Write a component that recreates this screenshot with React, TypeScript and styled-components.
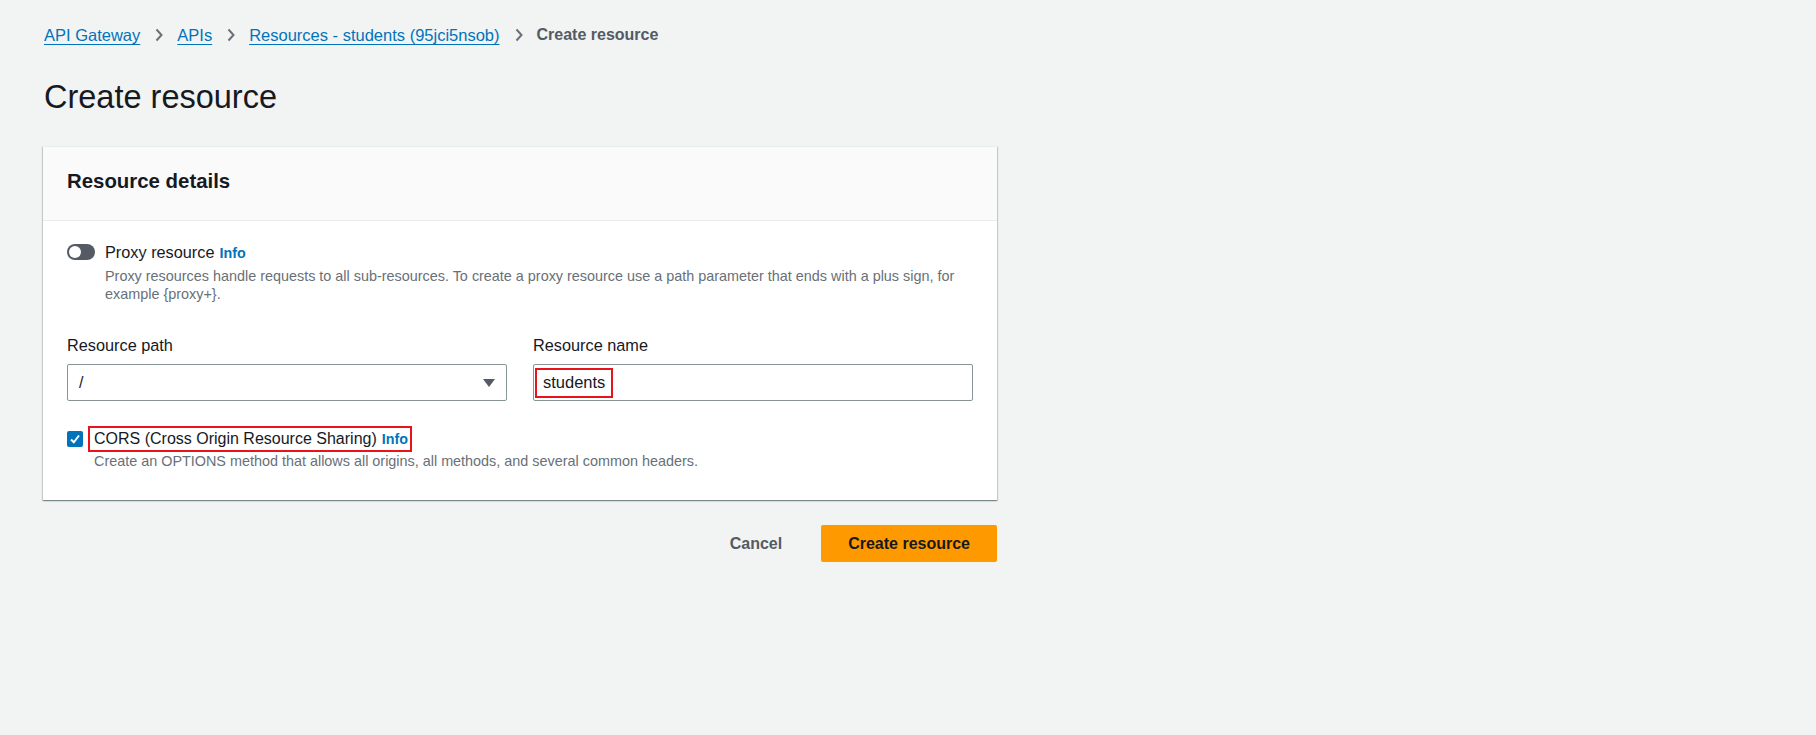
import React from "react";
import styled, { createGlobalStyle } from "styled-components";

const GlobalStyle = createGlobalStyle`
  html, body {
    margin: 0;
    padding: 0;
    background: #f2f3f3;
  }
  body {
    font-family: "Liberation Sans", Arial, sans-serif;
    color: #16191f;
  }
  * { box-sizing: border-box; }
`;

const Page = styled.div`
  width: 1816px;
  min-height: 735px;
  padding: 25px 0 0 43px;
`;

const Column = styled.div`
  width: 954px;
  display: flex;
  flex-direction: column;
`;

const Breadcrumbs = styled.nav`
  display: flex;
  align-items: center;
  height: 20px;
  font-size: 16.5px;
  line-height: 20px;
  padding-left: 1px;
`;

const CrumbLink = styled.a`
  color: #0073bb;
  text-decoration: underline;
  text-underline-offset: 3px;
  text-decoration-thickness: 1px;
  cursor: pointer;
`;

const CrumbCurrent = styled.span`
  color: #545b64;
  font-size: 16px;
  font-weight: 700;
`;

const Sep = styled.span`
  display: inline-flex;
  width: 8px;
  height: 14px;
  margin: 0 14px 0 15px;
  color: #687078;
`;

const Title = styled.h1`
  margin: 32px 0 0 0;
  padding-left: 1px;
  font-size: 32.5px;
  line-height: 40px;
  font-weight: 400;
  color: #16191f;
`;

const Card = styled.section`
  margin-top: 29px;
  background: #ffffff;
  border-top: 1px solid #eaeded;
  box-shadow: 0 1px 1px 0 rgba(0, 28, 36, 0.3),
    1px 1px 1px 0 rgba(0, 28, 36, 0.15),
    -1px 1px 1px 0 rgba(0, 28, 36, 0.15);
`;

const CardHeader = styled.header`
  height: 74px;
  display: flex;
  align-items: center;
  padding: 0 24px 6px 24px;
  background: #fafafa;
  border-bottom: 1px solid #eaeded;
`;

const CardTitle = styled.h2`
  margin: 0;
  font-size: 20.4px;
  line-height: 24px;
  font-weight: 700;
  color: #16191f;
`;

const CardBody = styled.div`
  padding: 20px 24px 30px 24px;
  display: flex;
  flex-direction: column;
`;

const ToggleRow = styled.div`
  display: flex;
  align-items: flex-start;
  gap: 10px;
`;

const ToggleTrack = styled.span<{ $on?: boolean }>`
  flex: none;
  position: relative;
  width: 28px;
  height: 16px;
  margin-top: 3px;
  border-radius: 8px;
  background: ${(p) => (p.$on ? "#0073bb" : "#545b64")};
`;

const ToggleKnob = styled.span<{ $on?: boolean }>`
  position: absolute;
  top: 2px;
  left: ${(p) => (p.$on ? "14px" : "2px")};
  width: 12px;
  height: 12px;
  border-radius: 50%;
  background: #ffffff;
`;

const OptionText = styled.div`
  display: flex;
  flex-direction: column;
`;

const OptionLabel = styled.div`
  font-size: 16.3px;
  line-height: 22px;
  height: 22px;
  color: #16191f;
  white-space: nowrap;
`;

const InfoLink = styled.a`
  display: inline-block;
  margin-left: 5px;
  font-size: 14.3px;
  line-height: 18px;
  font-weight: 700;
  color: #0073bb;
  cursor: pointer;
`;

const Description = styled.div<{ $indent?: number }>`
  font-size: 14.4px;
  line-height: 18px;
  color: #687078;
  margin-top: ${(p) => (p.$indent ? 0 : 4)}px;
  padding-left: ${(p) => p.$indent ?? 0}px;
`;

const FieldGrid = styled.div`
  margin-top: 31px;
  display: grid;
  grid-template-columns: 1fr 1fr;
  column-gap: 26px;
`;

const Field = styled.div`
  display: flex;
  flex-direction: column;
`;

const FieldLabel = styled.label`
  font-size: 16.3px;
  line-height: 22px;
  color: #16191f;
  margin-bottom: 8px;
`;

const SelectBox = styled.div`
  height: 37px;
  border: 1px solid #879596;
  border-radius: 2px;
  background: #fff;
  display: flex;
  align-items: center;
  justify-content: space-between;
  padding: 0 11px 0 11px;
  font-size: 16px;
  color: #16191f;
`;

const Caret = styled.svg`
  width: 12px;
  height: 8px;
  fill: #545b64;
`;

const InputBox = styled.div`
  height: 37px;
  border: 1px solid #879596;
  border-radius: 2px;
  background: #fff;
  display: flex;
  align-items: center;
  padding: 0 1px;
  font-size: 16.5px;
  color: #16191f;
`;

const Highlight = styled.span<{ $h: number }>`
  display: inline-flex;
  align-items: center;
  height: ${(p) => p.$h}px;
  border: 2px solid #e8141c;
  padding: 0 6px 0 6px;
`;

const CheckRow = styled.div`
  margin-top: 25px;
  display: flex;
  align-items: center;
  gap: 5px;
`;

const CheckBox = styled.span`
  flex: none;
  width: 16px;
  height: 16px;
  border-radius: 2px;
  background: #0073bb;
  display: inline-flex;
  align-items: center;
  justify-content: center;
`;

const CheckLabel = styled(Highlight)`
  padding: 0 2px 0 4px;
  font-size: 16px;
  line-height: 22px;
  color: #16191f;
`;

const Actions = styled.div`
  margin-top: 25px;
  display: flex;
  justify-content: flex-end;
  align-items: center;
  gap: 19px;
`;

const Button = styled.button<{ $primary?: boolean }>`
  height: 37px;
  border: none;
  border-radius: 2px;
  padding: 0 ${(p) => (p.$primary ? 27 : 20)}px;
  font-family: inherit;
  font-size: 16px;
  font-weight: 700;
  cursor: pointer;
  background: ${(p) => (p.$primary ? "#ff9900" : "transparent")};
  color: ${(p) => (p.$primary ? "#16191f" : "#545b64")};
`;

const Chevron = () => (
  <Sep>
    <svg width="8" height="14" viewBox="0 0 8 14" fill="none">
      <path d="M1.5 1.5 L6.5 7 L1.5 12.5" stroke="currentColor" strokeWidth="2" />
    </svg>
  </Sep>
);

export default function App() {
  return (
    <>
      <GlobalStyle />
      <Page>
        <Column>
          <Breadcrumbs>
            <CrumbLink>API Gateway</CrumbLink>
            <Chevron />
            <CrumbLink>APIs</CrumbLink>
            <Chevron />
            <CrumbLink>Resources - students (95jci5nsob)</CrumbLink>
            <Chevron />
            <CrumbCurrent>Create resource</CrumbCurrent>
          </Breadcrumbs>

          <Title>Create resource</Title>

          <Card>
            <CardHeader>
              <CardTitle>Resource details</CardTitle>
            </CardHeader>
            <CardBody>
              <ToggleRow>
                <ToggleTrack>
                  <ToggleKnob />
                </ToggleTrack>
                <OptionText>
                  <OptionLabel>
                    Proxy resource<InfoLink>Info</InfoLink>
                  </OptionLabel>
                  <Description>
                    Proxy resources handle requests to all sub-resources. To create a proxy resource use a path
                    parameter that ends with a plus sign, for example {"{proxy+}"}.
                  </Description>
                </OptionText>
              </ToggleRow>

              <FieldGrid>
                <Field>
                  <FieldLabel>Resource path</FieldLabel>
                  <SelectBox>
                    <span>/</span>
                    <Caret viewBox="0 0 12 8">
                      <path d="M0 0 H12 L6 8 Z" />
                    </Caret>
                  </SelectBox>
                </Field>
                <Field>
                  <FieldLabel>Resource name</FieldLabel>
                  <InputBox>
                    <Highlight $h={30}>students</Highlight>
                  </InputBox>
                </Field>
              </FieldGrid>

              <CheckRow>
                <CheckBox>
                  <svg width="12" height="12" viewBox="0 0 12 12" fill="none">
                    <path d="M2 6.5 L4.8 9.3 L10 2.5" stroke="#fff" strokeWidth="2" />
                  </svg>
                </CheckBox>
                <CheckLabel $h={26}>
                  CORS (Cross Origin Resource Sharing)<InfoLink>Info</InfoLink>
                </CheckLabel>
              </CheckRow>
              <Description $indent={27}>
                Create an OPTIONS method that allows all origins, all methods, and several common headers.
              </Description>
            </CardBody>
          </Card>

          <Actions>
            <Button>Cancel</Button>
            <Button $primary>Create resource</Button>
          </Actions>
        </Column>
      </Page>
    </>
  );
}
